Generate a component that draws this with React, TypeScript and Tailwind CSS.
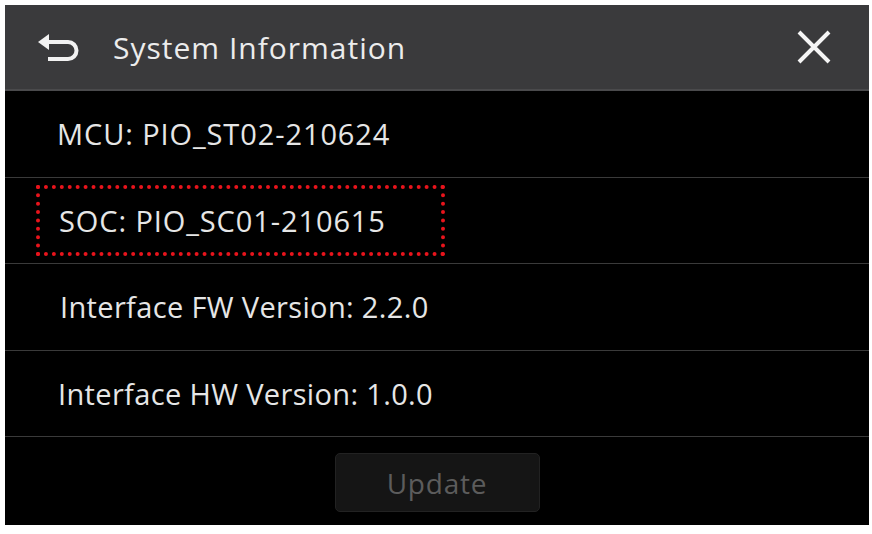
const rows = [
  { label: "MCU: PIO_ST02-210624", pad: "pl-[52px]", h: "h-[87px]", track: "tracking-[0.9px]" },
  { label: "SOC: PIO_SC01-210615", pad: "pl-[54px]", h: "h-[86px]", track: "tracking-[0.9px]", marked: true },
  { label: "Interface FW Version: 2.2.0", pad: "pl-[55px]", h: "h-[87px]", track: "tracking-[0.35px]" },
  { label: "Interface HW Version: 1.0.0", pad: "pl-[53px]", h: "h-[86px]", track: "tracking-[0.35px]" },
]

function BackIcon() {
  return (
    <svg width="46" height="30" viewBox="0 0 46 30" fill="none">
      <path d="M9 9 H31 A8.5 8.5 0 0 1 31 26 H11" stroke="#f2f2f2" strokeWidth="4" />
      <path d="M1 9 L12 1 V17 Z" fill="#f2f2f2" />
    </svg>
  )
}

function CloseIcon() {
  return (
    <svg width="34" height="34" viewBox="0 0 34 34">
      <path d="M2 2 L32 32 M32 2 L2 32" stroke="#f5f5f5" strokeWidth="4" />
    </svg>
  )
}

export default function App() {
  return (
    <div className="w-[872px] h-[534px] bg-white pt-[5px] pl-[5px]" style={{ fontFamily: '"Open Sans", "Noto Sans", sans-serif' }}>
      <div className="w-[864px] h-[520px] bg-black flex flex-col">
        <header className="h-[86px] bg-[#3a3a3c] flex items-center border-b-2 border-[#4a4a4c] shrink-0">
          <div className="ml-[32px] mt-[1px]">
            <BackIcon />
          </div>
          <h1 className="ml-[30px] text-[30px] text-[#ececec] tracking-[1px]">System Information</h1>
          <div className="ml-auto mr-[38px]">
            <CloseIcon />
          </div>
        </header>

        {rows.map((row) => (
          <div key={row.label} className={`${row.h} border-b border-[#3a3a3a] flex items-center shrink-0`}>
            {row.marked ? (
              <div className="ml-[31px] w-[409px] h-[71px] border-[4px] border-dotted border-[#e8141c] flex items-center pl-[19px]">
                <span className={`text-[29px] ${row.track} text-[#e6e6e6]`}>{row.label}</span>
              </div>
            ) : (
              <span className={`${row.pad} text-[29px] ${row.track} text-[#e6e6e6]`}>{row.label}</span>
            )}
          </div>
        ))}

        <div className="flex-1 flex justify-center pt-[16px]">
          <button className="w-[205px] h-[59px] bg-[#151515] border border-[#222] rounded-[5px] text-[28px] tracking-[0.8px] text-[#5c5c5c]">
            Update
          </button>
        </div>
      </div>
    </div>
  )
}
